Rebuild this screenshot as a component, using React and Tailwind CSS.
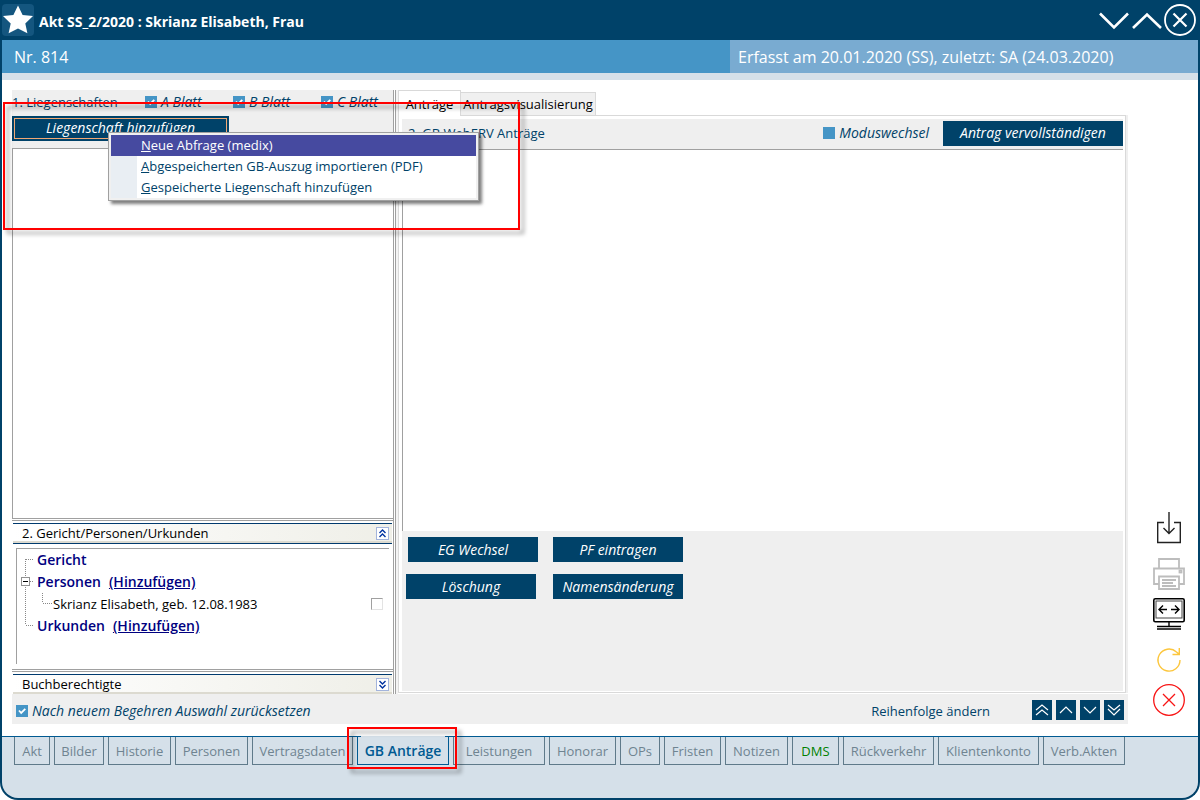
import React, { useState } from "react";

const bottomTabs = [
  { name: "Akt", width: "w-[36px]" },
  { name: "Bilder", width: "w-[50px]" },
  { name: "Historie", width: "w-[63px]" },
  { name: "Personen", width: "w-[73px]" },
  { name: "Vertragsdaten", width: "w-[101px]" },
  { name: "GB Anträge", width: "w-[92px]", active: true },
  { name: "Leistungen", width: "w-[92px]" },
  { name: "Honorar", width: "w-[67px]" },
  { name: "OPs", width: "w-[40px]" },
  { name: "Fristen", width: "w-[57px]" },
  { name: "Notizen", width: "w-[63px]" },
  { name: "DMS", width: "w-[47px]", green: true },
  { name: "Rückverkehr", width: "w-[91px]" },
  { name: "Klientenkonto", width: "w-[101px]" },
  { name: "Verb.Akten", width: "w-[82px]" },
];

const orderButtons = [
  { label: "Ganz nach oben", points: ["4,10 10,5 16,10", "4,15 10,10 16,15"] },
  { label: "Nach oben", points: ["4,13 10,7 16,13"] },
  { label: "Nach unten", points: ["4,7 10,13 16,7"] },
  { label: "Ganz nach unten", points: ["4,5 10,10 16,5", "4,9 10,15 16,9"] },
];

const CheckBox = ({ label, defaultChecked = false }) => {
  const [checked, setChecked] = useState(defaultChecked);
  return (
    <label className="flex items-center gap-1 text-sm leading-[18px] italic">
      <span className="grid size-3">
        <input
          type="checkbox"
          checked={checked}
          onChange={(e) => setChecked(e.target.checked)}
          className="col-start-1 row-start-1 size-3 appearance-none bg-[#4595c6]"
        />
        {checked && (
          <svg
            viewBox="0 0 12 12"
            className="pointer-events-none col-start-1 row-start-1 size-3"
          >
            <path d="M3 5.5 5.2 8 9.3 3.8" fill="none" stroke="#fff" strokeWidth="1.8" />
          </svg>
        )}
      </span>
      {label}
    </label>
  );
};

const DarkButton = ({ className, children }) => (
  <button
    type="button"
    className={`h-[25px] bg-[#004269] text-center text-sm leading-6 text-white italic ${className}`}
  >
    {children}
  </button>
);

// double line between two resizable panes
const Splitter = () => (
  <div className="h-[5px] shrink-0">
    <div className="h-[3px] border-y border-[#a0a0a0] bg-white" />
  </div>
);

const SectionHeader = ({ title, open }) => (
  <div
    className={`mx-px flex shrink-0 items-center justify-between border-t border-[#003a6e] bg-linear-to-r from-white to-[#efefe8] pr-[3px] pb-px pl-[9px] text-black shadow-[inset_0_-2px_0_#dcdad0] ${
      open ? "h-[21px] border-b" : "h-5"
    }`}
  >
    <span>{title}</span>
    <button type="button" aria-label={title}>
      <svg viewBox="0 0 13 13" className="size-[13px]" fill="none">
        <rect x="0.5" y="0.5" width="12" height="12" fill="#fff" stroke="#a3b4dc" />
        <path
          d={open ? "M3.5 6 6.5 3 9.5 6M3.5 10 6.5 7 9.5 10" : "M3.5 3 6.5 6 9.5 3M3.5 7 6.5 10 9.5 7"}
          stroke="#0033a0"
          strokeWidth="1.4"
        />
      </svg>
    </button>
  </div>
);

const TitleBar = () => (
  <header className="flex h-10 shrink-0 items-center justify-between text-white">
    <div className="flex items-center gap-[5px]">
      <svg viewBox="0 0 32 32" className="size-8">
        <rect width="32" height="32" rx="4" fill="#14567f" />
        <path
          d="M16 1.5 20.6 11 31 12 23.3 19.6 25.4 29.2 16 24.5 6.6 29.2 8.7 19.6 1 12 11.4 11Z"
          fill="#fff"
        />
      </svg>
      <h1 className="pt-1 text-sm leading-[18px] font-bold">
        Akt SS_2/2020 : Skrianz Elisabeth, Frau
      </h1>
    </div>
    <div className="flex items-center gap-px pr-0.5">
      <button type="button" aria-label="Minimieren">
        <svg viewBox="0 0 32 32" className="size-8" fill="none">
          <path d="M2 9.5 16 23.5 30 9.5" stroke="#fff" strokeWidth="2.6" />
        </svg>
      </button>
      <button type="button" aria-label="Maximieren">
        <svg viewBox="0 0 32 32" className="size-8" fill="none">
          <path d="M2 24 16 10.5 30 24" stroke="#fff" strokeWidth="2.6" />
        </svg>
      </button>
      <button type="button" aria-label="Schließen">
        <svg viewBox="0 0 32 32" className="size-8" fill="none" stroke="#fff">
          <circle cx="16" cy="16" r="15" strokeWidth="1.8" />
          <path d="M9.5 9.5 22.5 22.5M22.5 9.5 9.5 22.5" strokeWidth="2.2" />
        </svg>
      </button>
    </div>
  </header>
);

const MenuItem = ({ hotkey, children }) => (
  <button
    role="menuitem"
    type="button"
    className="block h-[21px] w-full border-l-[26px] border-[#e9eef3] bg-white pl-1 text-left leading-[21px]"
  >
    <u>{hotkey}</u>
    {children}
  </button>
);

const ContextMenu = () => (
  <div
    role="menu"
    className="absolute top-4 left-24 z-20 w-[371px] border border-[#a0a0a0] bg-[#f0f0f0] p-0.5 shadow-[3px_3px_3px_rgba(0,0,0,0.5)]"
  >
    <button
      role="menuitem"
      type="button"
      className="block h-[21px] w-[365px] bg-[#464aa0] pl-[30px] text-left leading-[21px] text-white"
    >
      <u>N</u>eue Abfrage (medix)
    </button>
    <MenuItem hotkey="A">bgespeicherten GB-Auszug importieren (PDF)</MenuItem>
    <MenuItem hotkey="G">espeicherte Liegenschaft hinzufügen</MenuItem>
  </div>
);

const Tree = () => (
  <div className="mx-1 mt-1 mb-[5px] flex h-[116px] shrink-0 border-t border-l border-[#a0a0a0] bg-white">
    <svg viewBox="0 0 20 88" className="h-[88px] w-5 shrink-0" fill="none">
      <path
        d="M8.5 10V76M9 10.5H17M13 32.5H17M9 76.5H17"
        stroke="#888"
        strokeDasharray="1 1"
      />
      <rect x="4.5" y="28.5" width="8" height="8" fill="#fff" stroke="#919191" />
      <path d="M6 32.5H11" stroke="#000" />
    </svg>
    <div className="flex-1 leading-[22px] text-black">
      <div className="text-sm leading-[22px] font-semibold text-[#000080]">Gericht</div>
      <div className="flex gap-2 text-sm leading-[22px] font-semibold text-[#000080]">
        Personen
        <a href="#personen" className="underline">(Hinzufügen)</a>
      </div>
      <label className="flex h-[22px] items-center pr-1.5">
        <svg viewBox="0 0 16 22" className="h-[22px] w-4" fill="none">
          <path d="M5.5 0V10M6 10.5H15" stroke="#888" strokeDasharray="1 1" />
        </svg>
        <span className="flex-1">Skrianz Elisabeth, geb. 12.08.1983</span>
        <input
          type="checkbox"
          className="size-3 appearance-none border border-t-[#a0a0a0] border-r-[#e3e3e3] border-b-[#e3e3e3] border-l-[#a0a0a0] bg-white"
        />
      </label>
      <div className="flex gap-2 text-sm leading-[22px] font-semibold text-[#000080]">
        Urkunden
        <a href="#urkunden" className="underline">(Hinzufügen)</a>
      </div>
    </div>
  </div>
);

const LeftPane = () => (
  <section className="flex w-[381px] shrink-0 flex-col bg-white">
    <div className="bg-[#efefef] pb-[7px]">
      <div className="flex h-[26px] items-center pb-0.5">
        <span className="w-[133px]">1. Liegenschaften</span>
        <div className="w-[88px]">
          <CheckBox label="A Blatt" defaultChecked />
        </div>
        <div className="w-[88px]">
          <CheckBox label="B Blatt" defaultChecked />
        </div>
        <CheckBox label="C Blatt" defaultChecked />
      </div>
      <div className="relative">
        <button
          type="button"
          className="block h-[25px] w-[217px] border-2 border-[#004269] bg-[#004269] text-sm text-white italic"
        >
          <span className="block h-[21px] border border-[#f0a875] leading-[18px]">
            Liegenschaft hinzufügen
          </span>
        </button>
        <ContextMenu />
      </div>
    </div>
    <div className="min-h-[120px] flex-1 border-t border-l border-[#a0a0a0]" />
    <Splitter />
    <SectionHeader title="2. Gericht/Personen/Urkunden" open />
    <Tree />
    <Splitter />
    <SectionHeader title="Buchberechtigte" />
  </section>
);

const RightPane = () => (
  <section className="flex min-w-0 flex-1 flex-col pb-px">
    <div role="tablist" className="flex h-[25px] items-end bg-white text-black">
      <button
        role="tab"
        type="button"
        className="z-10 -mb-px h-[26px] w-[63px] border border-b-0 border-[#d9d9d9] bg-white text-center leading-[22px]"
      >
        Anträge
      </button>
      <button
        role="tab"
        type="button"
        className="h-[23px] w-[135px] border border-b-0 border-l-0 border-[#d9d9d9] bg-[#f0f0f0] text-center leading-[22px]"
      >
        Antragsvisualisierung
      </button>
    </div>
    <div className="flex flex-1 flex-col bg-[#efefef] pr-0.5">
      <div className="flex flex-1 flex-col border border-[#d9d9d9] bg-white pt-[3px] pr-0.5 pb-px pl-[3px]">
        <div className="flex h-[31px] items-center border-b border-[#a0a0a0] bg-[#efefef] pb-0.5 pl-1.5">
          <span className="flex-1">2. GB WebERV Anträge</span>
          <CheckBox label="Moduswechsel" />
          <DarkButton className="ml-3.5 w-[180px]">Antrag vervollständigen</DarkButton>
        </div>
        <div className="min-h-[120px] flex-1 border-l border-[#a0a0a0]" />
        <div className="flex h-40 flex-col gap-3 bg-[#efefef] pt-1.5">
          <div className="flex gap-[15px] pl-1.5">
            <DarkButton className="w-[130px]">EG Wechsel</DarkButton>
            <DarkButton className="w-[130px]">PF eintragen</DarkButton>
          </div>
          <div className="flex gap-[17px] pl-1">
            <DarkButton className="w-[130px]">Löschung</DarkButton>
            <DarkButton className="w-[130px]">Namensänderung</DarkButton>
          </div>
        </div>
      </div>
    </div>
  </section>
);

const ToolRail = () => (
  <aside className="flex w-[70px] shrink-0 flex-col justify-end pb-2 pl-[25px]">
    <button type="button" aria-label="Speichern" className="mb-3.5 size-8">
      <svg viewBox="0 0 32 32" className="size-8" fill="none" stroke="#222" strokeWidth="1.4">
        <path d="M11 10.5H4.7V30.5H27.3V10.5H21M16 0V21M10.5 16 16 21.5 21.5 16" />
      </svg>
    </button>
    <button type="button" aria-label="Drucken" className="mb-2 size-8">
      <svg viewBox="0 0 32 32" className="size-8" fill="none" stroke="#bdbdbd" strokeWidth="1.8">
        <path d="M6 10V1H26V10M5.5 26H1V10.5H31V26H26.5M6 18.5H26V31H6Z" />
        <path d="M9 22H23M9 25H20M9 28H23" />
        <rect x="26.5" y="12.5" width="2" height="2" />
      </svg>
    </button>
    <button type="button" aria-label="Bildschirm anpassen" className="mb-3.5 size-8">
      <svg viewBox="0 0 32 32" className="size-8" fill="none" stroke="#000" strokeWidth="1.4">
        <rect x="0.8" y="0.8" width="30.4" height="23" rx="1.5" strokeWidth="1.6" />
        <rect x="3" y="3" width="26" height="17" stroke="#444" strokeWidth="1" />
        <path d="M6 11.5H14M10 7.5 6 11.5 10 15.5M18 11.5H26M22 7.5 26 11.5 22 15.5M16 24V28M4 28.5H28M4 31H28" />
      </svg>
    </button>
    <button type="button" aria-label="Aktualisieren" className="mb-2 size-8">
      <svg viewBox="0 0 32 32" className="size-8" fill="none" stroke="#fcc63c" strokeWidth="1.4">
        <path d="M27 16A11 11 0 1 1 23.5 8L26 10M26.3 4V10.5H19.5" />
      </svg>
    </button>
    <button type="button" aria-label="Abbrechen" className="size-8">
      <svg viewBox="0 0 32 32" className="size-8" fill="none" stroke="#f81414" strokeWidth="1.3">
        <circle cx="16" cy="16" r="15.3" />
        <path d="M10 10 22 22M22 10 10 22" />
      </svg>
    </button>
  </aside>
);

const App = () => {
  return (
    <div className="relative flex min-h-screen flex-col overflow-hidden rounded-b-[18px] border-x-2 border-b-2 border-[#004269] bg-[#004269] font-['Open_Sans',sans-serif] text-[13px] leading-[18px] text-[#004269]">
      <TitleBar />
      <div className="flex h-[33px] shrink-0 items-center bg-[#4595c6] text-base text-white">
        <span className="flex-1 pl-3">Nr. 814</span>
        <span className="h-full w-[468px] bg-[#79abd1] pl-2 leading-[34px]">
          Erfasst am 20.01.2020 (SS), zuletzt: SA (24.03.2020)
        </span>
      </div>
      <div className="h-[7px] shrink-0 bg-[#d5e0e9]" />

      <main className="flex flex-1 bg-white pt-2.5 pb-3 pl-2.5">
        <div className="relative flex min-w-0 flex-1 flex-col">
          <div className="flex flex-1">
            <LeftPane />
            <div className="w-[5px] shrink-0 bg-[#f4f4f4]">
              <div className="h-full w-[3px] border-x border-[#a0a0a0] bg-white" />
            </div>
            <RightPane />
          </div>
          <footer className="flex h-[30px] shrink-0 items-center bg-[#efefef] px-1 pt-0.5">
            <div className="flex-1 pt-0.5">
              <CheckBox label="Nach neuem Begehren Auswahl zurücksetzen" defaultChecked />
            </div>
            <span className="mr-[42px] pt-0.5">Reihenfolge ändern</span>
            <div className="flex gap-1">
              {orderButtons.map((b) => (
                <button key={b.label} type="button" aria-label={b.label} className="size-5 bg-[#004269]">
                  <svg viewBox="0 0 20 20" className="size-5" fill="none" stroke="#fff" strokeWidth="1.2">
                    {b.points.map((p) => (
                      <polyline key={p} points={p} />
                    ))}
                  </svg>
                </button>
              ))}
            </div>
          </footer>
          {/* marks the import menu */}
          <div className="pointer-events-none absolute top-3 -left-[9px] z-30 h-32 w-[517px] border-2 border-[#ff0000] drop-shadow-[4px_4px_2px_rgba(0,0,0,0.4)]" />
        </div>
        <ToolRail />
      </main>

      <nav className="h-[62px] shrink-0 border-t border-[#005a92] bg-[#d5e0e9]">
        <div className="flex gap-1 pl-3">
          {bottomTabs.map((tab) =>
            tab.active ? (
              <div key={tab.name} className="relative">
                <button
                  type="button"
                  className={`h-7 border border-t-0 border-[#005a92] text-center text-sm leading-[26px] font-semibold text-[#005a92] ${tab.width}`}
                >
                  {tab.name}
                </button>
                <div className="absolute -top-px right-1 left-1 h-px bg-[#d5e0e9]" />
                <div className="pointer-events-none absolute -top-2.5 -right-2 -left-2.5 z-30 h-[42px] border-2 border-[#ff0000] drop-shadow-[4px_4px_2px_rgba(0,0,0,0.4)]" />
              </div>
            ) : (
              <button
                key={tab.name}
                type="button"
                className={`h-7 border border-t-0 border-[#5f7a8a] text-center leading-7 ${tab.width} ${
                  tab.green ? "text-[#008000]" : "text-[#6f8491]"
                }`}
              >
                {tab.name}
              </button>
            )
          )}
        </div>
      </nav>
    </div>
  );
};

export default App;
